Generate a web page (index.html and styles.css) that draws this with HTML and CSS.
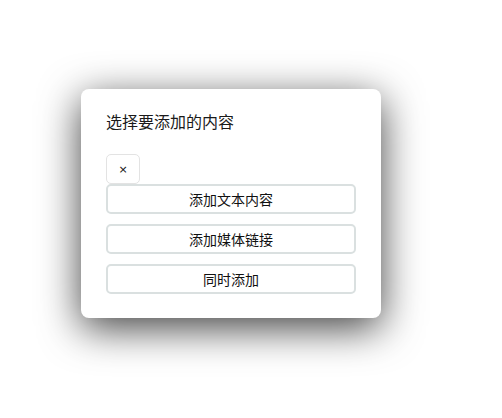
FILE: index.html
```html
<!DOCTYPE html>
<html lang="zh">
<head>
<meta charset="utf-8">
<link rel="stylesheet" href="styles.css">
</head>
<body>
<div class="dialog">
  <div class="title">选择要添加的内容</div>
  <button class="close" type="button">×</button>
  <div class="actions">
    <button class="action" type="button">添加文本内容</button>
    <button class="action" type="button">添加媒体链接</button>
    <button class="action" type="button">同时添加</button>
  </div>
</div>
</body>
</html>
```
FILE: styles.css
```css
html, body {
  margin: 0;
  background: #ffffff;
}
html {
  height: 100%;
}
body {
  min-height: 100%;
  box-sizing: border-box;
  padding: 89px 0 0 81px;
  font-family: "Noto Sans CJK SC", "Noto Sans", sans-serif;
  color: #111;
}
.dialog {
  width: 300px;
  box-sizing: border-box;
  padding: 20px 25px 24px;
  background: #fff;
  border-radius: 8px;
  box-shadow: 0 10px 40px rgba(0, 0, 0, 0.75);
  display: flex;
  flex-direction: column;
  align-items: flex-start;
}
.title {
  font-size: 16px;
  line-height: 24px;
  color: #1a1a1a;
}
.close {
  margin-top: 21px;
  width: 34px;
  height: 30px;
  padding: 0;
  background: #fff;
  border: 1px solid #e3e3e3;
  border-radius: 5px;
  font-family: "DejaVu Sans", sans-serif;
  font-size: 11px;
  color: #111;
}
.actions {
  align-self: stretch;
  display: flex;
  flex-direction: column;
  gap: 10px;
}
.action {
  height: 30px;
  padding: 0;
  background: #fff;
  border: 2px solid #dae0e0;
  border-radius: 5px;
  font-family: "Noto Sans CJK SC", "Noto Sans", sans-serif;
  font-size: 14px;
  color: #111;
}
```
